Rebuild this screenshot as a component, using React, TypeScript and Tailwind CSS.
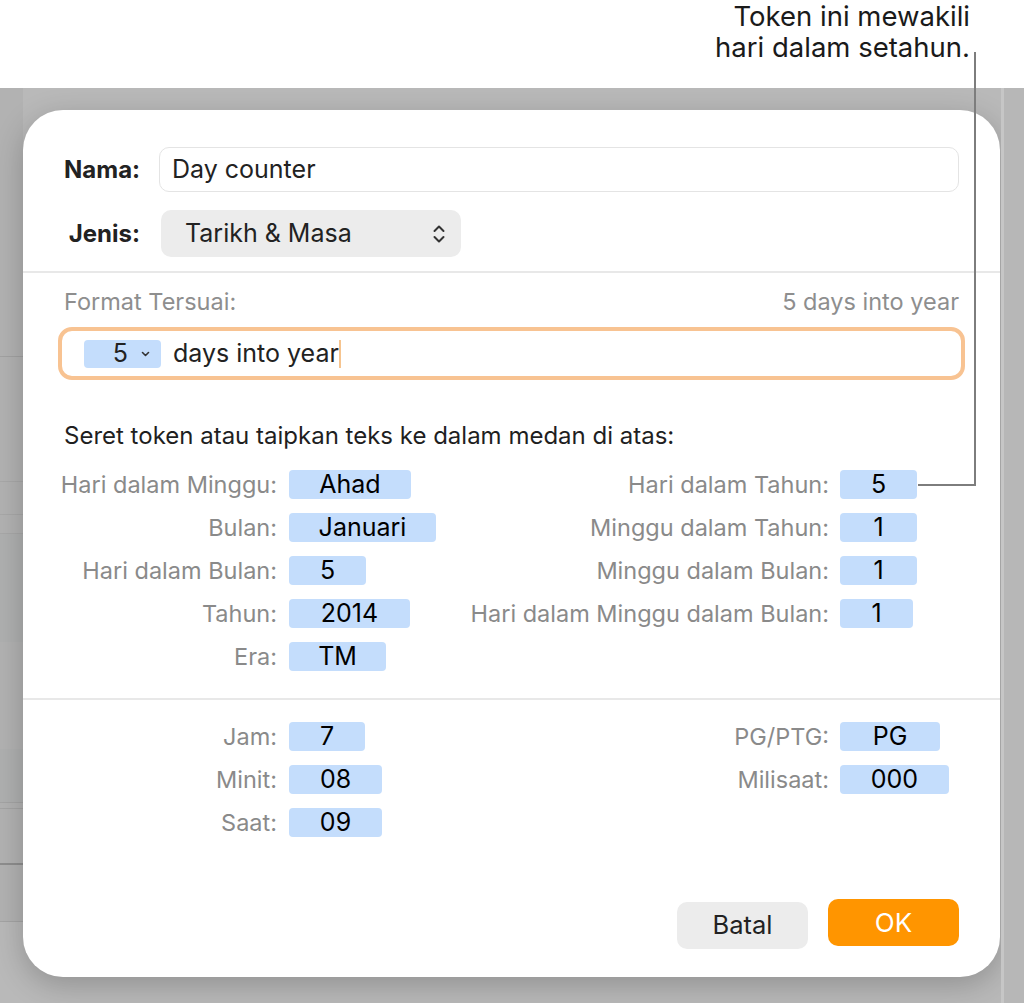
import React from 'react';

type Tok = { label: string; value: string; w: string };

const dateLeft: Tok[] = [
  { label: 'Hari dalam Minggu:', value: 'Ahad', w: 'w-[122px]' },
  { label: 'Bulan:', value: 'Januari', w: 'w-[147px]' },
  { label: 'Hari dalam Bulan:', value: '5', w: 'w-[77px]' },
  { label: 'Tahun:', value: '2014', w: 'w-[121px]' },
  { label: 'Era:', value: 'TM', w: 'w-[97px]' },
];

const dateRight: (Tok | null)[] = [
  { label: 'Hari dalam Tahun:', value: '5', w: 'w-[77px]' },
  { label: 'Minggu dalam Tahun:', value: '1', w: 'w-[77px]' },
  { label: 'Minggu dalam Bulan:', value: '1', w: 'w-[77px]' },
  { label: 'Hari dalam Minggu dalam Bulan:', value: '1', w: 'w-[73px]' },
  null,
];

const timeLeft: Tok[] = [
  { label: 'Jam:', value: '7', w: 'w-[76px]' },
  { label: 'Minit:', value: '08', w: 'w-[93px]' },
  { label: 'Saat:', value: '09', w: 'w-[93px]' },
];

const timeRight: (Tok | null)[] = [
  { label: 'PG/PTG:', value: 'PG', w: 'w-[100px]' },
  { label: 'Milisaat:', value: '000', w: 'w-[109px]' },
  null,
];

const Token = ({ t }: { t: Tok }) => (
  <div className={`${t.w} h-[29px] rounded-[4px] bg-[#c4ddfc] flex items-center justify-center text-[25px] text-black`}>
    {t.value}
  </div>
);

const TokenRows = ({ left, right }: { left: Tok[]; right: (Tok | null)[] }) => (
  <div className="flex flex-col">
    {left.map((l, i) => {
      const r = right[i];
      return (
        <div key={l.label} className="flex items-center h-[43px]">
          <div className="w-[254px] text-right whitespace-nowrap text-[23.5px] text-[#8a8a8a]">{l.label}</div>
          <div className="w-[252px] pl-3">
            <Token t={l} />
          </div>
          <div className="w-[300px] flex justify-end whitespace-nowrap text-[23.5px] text-[#8a8a8a]">{r ? r.label : ''}</div>
          <div className="pl-[11px]">{r && <Token t={r} />}</div>
        </div>
      );
    })}
  </div>
);

export default function App() {
  return (
    <div className="relative w-[1024px] h-[1003px] bg-white overflow-hidden flex flex-col font-['Inter','Liberation_Sans',sans-serif]">
      {/* callout */}
      <div className="h-[88px] shrink-0 flex flex-col items-end pr-[54px] pt-[1px] text-[27.5px] leading-[31px] text-[#1a1a1a]">
        <span>Token ini mewakili</span>
        <span>hari dalam setahun.</span>
      </div>

      <div className="flex-1 flex bg-[#b9b9b9]">
        {/* window behind, left edge */}
        <div className="w-[23px] shrink-0 flex flex-col bg-[#b2b2b2]">
          <div className="h-[269px] border-b border-[#a2a2a2]" />
          <div className="h-[125px] border-b border-[#a8a8a8]" />
          <div className="h-[33px] border-b border-[#a8a8a8]" />
          <div className="h-[19px] border-b border-[#a8a8a8]" />
          <div className="h-[108px] bg-[#afb0b0]" />
          <div className="h-[107px]" />
          <div className="h-[54px] bg-[#afb0b0] border-b border-[#a4a4a4]" />
          <div className="h-[6px] border-b border-[#a4a4a4]" />
          <div className="h-[56px] border-b-2 border-[#8e8e8e]" />
          <div className="h-[57px] border-b border-[#a4a4a4]" />
          <div className="flex-1 bg-[#b9b9b9]" />
        </div>

        {/* dialog */}
        <div className="mt-[22px] w-[977px] h-[867px] shrink-0 bg-white rounded-[40px] shadow-[0_8px_30px_rgba(0,0,0,0.22)] flex flex-col">
          <div className="px-[41px] pt-[37px] flex flex-col">
            <div className="flex items-center">
              <div className="w-[76px] text-right whitespace-nowrap text-[24px] font-bold text-[#222]">Nama:</div>
              <div className="ml-[19px] flex-1 h-[45px] rounded-[10px] border border-[#e4e4e4] flex items-center pl-[12px] text-[25px] text-[#222]">
                Day counter
              </div>
            </div>
            <div className="flex items-center mt-[18px]">
              <div className="w-[76px] text-right whitespace-nowrap text-[24px] font-bold text-[#222]">Jenis:</div>
              <div className="ml-[21px] w-[300px] h-[47px] rounded-[10px] bg-[#ececec] flex items-center justify-between pl-[24px] pr-[15px] text-[25px] text-[#222]">
                <span>Tarikh &amp; Masa</span>
                <svg width="14" height="22" viewBox="0 0 14 22" fill="none" stroke="#333" strokeWidth="2" strokeLinecap="round" strokeLinejoin="round">
                  <path d="M2.5 8 L7 3.5 L11.5 8" />
                  <path d="M2.5 14 L7 18.5 L11.5 14" />
                </svg>
              </div>
            </div>
          </div>

          <div className="mt-[14px] h-[2px] bg-[#e8e8e8]" />

          <div className="px-[41px] pt-[15px] flex flex-col">
            <div className="flex justify-between text-[23.5px] leading-[28px] text-[#8e8e8e]">
              <span>Format Tersuai:</span>
              <span>5 days into year</span>
            </div>
            <div className="mt-[11px] -mx-[6px] h-[53px] rounded-[14px] border-4 border-[#f8c392] flex items-center pl-[22px]">
              <div className="w-[77px] h-[28px] rounded-[4px] bg-[#c4ddfc] flex items-center justify-end pr-[11px] gap-[13px] text-[25px] text-[#222]">
                <span>5</span>
                <svg width="9" height="6" viewBox="0 0 9 6" fill="none" stroke="#333" strokeWidth="1.6" strokeLinecap="round" strokeLinejoin="round">
                  <path d="M1.5 1.5 L4.5 4.5 L7.5 1.5" />
                </svg>
              </div>
              <span className="ml-[12px] text-[25px] text-[#222]">days into year</span>
              <span className="w-[2px] h-[28px] bg-[#f6c48f]" />
            </div>

            <div className="mt-[42px] whitespace-nowrap text-[24px] leading-[28px] text-[#1f1f1f]">
              Seret token atau taipkan teks ke dalam medan di atas:
            </div>
          </div>

          <div className="mt-[13px]">
            <TokenRows left={dateLeft} right={dateRight} />
          </div>

          <div className="mt-[20px] h-[2px] bg-[#e8e8e8]" />

          <div className="mt-[15px]">
            <TokenRows left={timeLeft} right={timeRight} />
          </div>

          <div className="flex-1 flex items-end justify-end gap-[20px] px-[41px] pb-[28px]">
            <button className="w-[131px] h-[47px] rounded-[10px] bg-[#ececec] text-[25.5px] text-[#222]">Batal</button>
            <button className="w-[131px] h-[47px] mb-[3px] rounded-[10px] bg-[#ff9500] text-[26px] text-white">OK</button>
          </div>
        </div>

        {/* window behind, right edge */}
        <div className="flex-1 flex">
          <div className="w-[3px] ml-[1px] bg-[#c6c6c6]" />
          <div className="flex-1 bg-[#b7b7b7]" />
        </div>
      </div>

      {/* leader line from the note to the token */}
      <svg className="absolute left-0 top-0 pointer-events-none" width="1024" height="1003">
        <path d="M975 52 V485 H918" fill="none" stroke="#7d7d7d" strokeWidth="2" />
      </svg>
    </div>
  );
}
